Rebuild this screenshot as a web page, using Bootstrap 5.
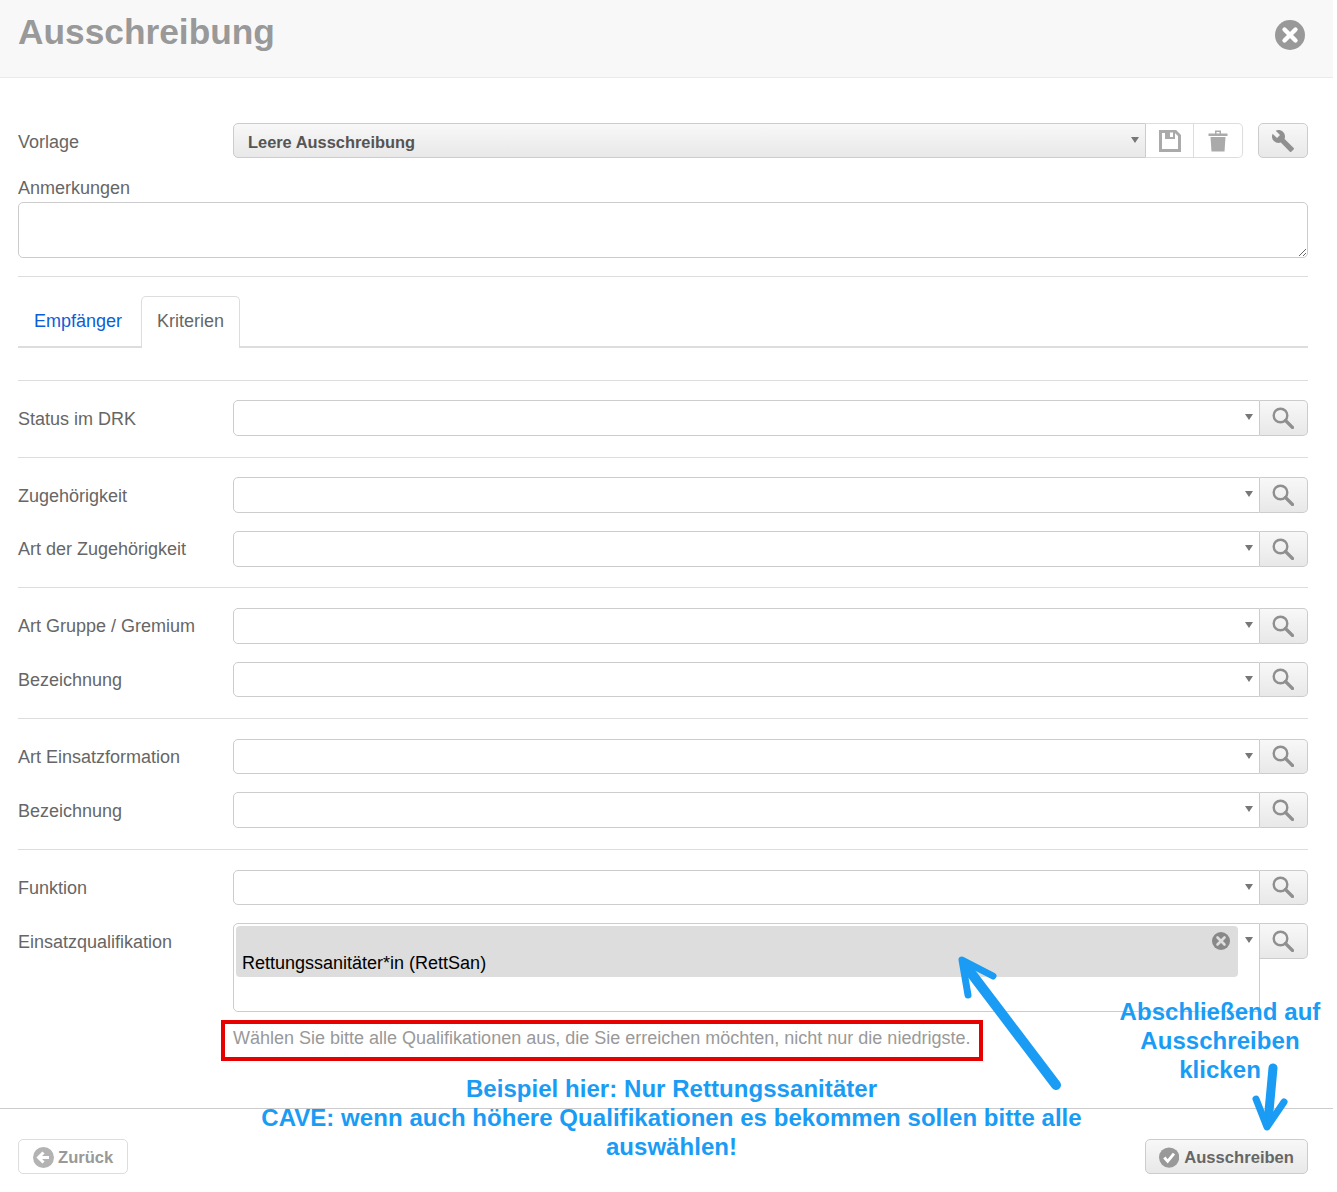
<!DOCTYPE html>
<html lang="de">
<head>
<meta charset="utf-8">
<title>Ausschreibung</title>
<link href="https://cdn.jsdelivr.net/npm/bootstrap@5.3.0/dist/css/bootstrap.min.css" rel="stylesheet">
<style>
html,body{height:1192px;overflow:hidden;background:#fff}
body{font-family:"Liberation Sans",Arial,sans-serif;font-size:18px;color:#666;line-height:1.2}
.shell{position:relative;width:1333px;height:1192px}
.dlg-head{height:78px;background:#f8f8f8;border-bottom:1px solid #eaeaea;padding:0 28px 0 18px}
.dlg-title{font-size:35.3px;font-weight:700;color:#999;line-height:1;margin:14px 0 0}
.dlg-close{margin:20px 0 0 0;width:30px;height:30px;padding:0;border:0;background:none;display:block}
.dlg-body{padding:45px 25px 0 18px}
.lbl{width:215px;flex:none;padding-top:2.6px}
.row-top .lbl{padding-top:4px}
.sel-box{flex:1 1 auto;min-width:0;height:100%;border:1px solid #ccc;border-radius:5px 0 0 5px;background:#fff;position:relative}
.sel-box.plate{background:linear-gradient(#f8f8f8,#e8e8e8);font-weight:700;font-size:16.4px;color:#555;padding:5px 0 0 14px;display:flex;align-items:center}
.caret-mk{position:absolute;right:6px;top:13px;width:0;height:0;border-left:4px solid transparent;border-right:4px solid transparent;border-top:6px solid #777}
.find-btn{flex:none;width:48px;height:100%;border:1px solid #ccc;border-left:0;border-radius:0 5px 5px 0;background:linear-gradient(#f8f8f8,#e8e8e8);display:flex;align-items:center;justify-content:center}
.find-btn svg{margin-right:2px}
.row-top{height:35px}
.tool-cell{flex:none;width:48px;height:100%;border:1px solid #ddd;border-left:0;background:#fff;display:flex;align-items:center;justify-content:center}
.tool-cell.last{width:49px;border-radius:0 5px 5px 0}
.wrench-btn{flex:none;width:50px;height:100%;margin-left:15px;border:1px solid #ccc;border-radius:5px;background:linear-gradient(#f8f8f8,#e8e8e8);display:flex;align-items:center;justify-content:center}
.note-lbl{margin-top:20px;height:24px;line-height:20px}
.note-area{display:block;width:100%;height:56px;border:1px solid #ccc;border-radius:5px;background:#fff;resize:vertical}
.rule{height:1px;background:#ddd;margin:18px 0 0}
.tabbar{display:flex;margin-top:19px;height:52px;border-bottom:2px solid #ddd}
.tabbar .tb{display:block;height:52px;text-decoration:none}
.tb.one{color:#0b5ed7;padding:0 16px;margin-right:3px;width:120px;line-height:50px}
.tb.two{color:#666;padding:0 15px;width:99px;line-height:48px;background:#fff;border:1px solid #ddd;border-bottom:0;border-radius:5px 5px 0 0;position:relative;margin-bottom:-2px}
.grp{padding:19.8px 0 20.53px;border-bottom:1px solid #ddd}
.grp.first{border-top:1px solid #ddd;margin-top:31.6px}
.grp.pre{padding-bottom:20.83px}
.grp.tail{border-bottom:0;padding:19.9px 0 0}
.frow{height:35.67px}
.frow + .frow{margin-top:18px}
.frow.tall{height:89px}
.frow.tall .lbl{padding-top:9px}
.frow.tall .find-btn{height:35.67px}
.chip{position:absolute;left:2px;top:2px;right:21px;height:51px;background:#ddd;border-radius:4px;color:#000;padding:27px 0 0 6px;line-height:20px}
.chip-x{position:absolute;right:7px;top:5px;width:20px;height:20px}
.hint{margin:16px 0 0 215px;color:#999;line-height:20px}
.dlg-foot{position:absolute;left:0;right:0;top:1108px;border-top:1px solid #ccc;padding:30px 25px 0 18px}
.act-btn{height:35px;border:1px solid #ccc;border-radius:5px;font-weight:700;display:flex;align-items:center;padding:2px 13px 0 14px;gap:4px;font-size:16.6px;background:#fff}
.act-btn.dim{color:#999;border-color:#ddd;width:110px}
.act-btn.main{color:#666;width:163px;padding-left:13px;gap:5px;background:linear-gradient(#f8f8f8,#e8e8e8)}
.red-box{position:absolute;left:221px;top:1020px;width:762px;height:41px;border:4px solid #e60000;pointer-events:none}
.note-blue{position:absolute;color:#1a9cf5;font-weight:700;font-size:24px;line-height:29px;text-align:center;letter-spacing:.05px}
.nb-a{left:240px;top:1074px;width:863px}
.nb-b{left:1110px;top:997px;width:220px}
.arrows{position:absolute;left:0;top:0;pointer-events:none}
</style>
</head>
<body>
<div class="shell">
  <div class="dlg-head d-flex justify-content-between align-items-start">
    <h1 class="dlg-title">Ausschreibung</h1>
    <button class="dlg-close" aria-label="Schließen">
      <svg width="30" height="30" viewBox="0 0 30 30"><circle cx="15" cy="15" r="15" fill="#999"/><path d="M9.500 9.500l11 11M20.500 9.500l-11 11" stroke="#fff" stroke-width="4.400" stroke-linecap="round"/></svg>
    </button>
  </div>

  <div class="dlg-body">
    <div class="d-flex align-items-center row-top">
      <div class="lbl">Vorlage</div>
      <div class="sel-box plate">Leere Ausschreibung<span class="caret-mk"></span></div>
      <div class="tool-cell"><svg width="22" height="22" viewBox="0 0 22 22"><path d="M1.500 1.500h15l4 4v15h-19z" fill="none" stroke="#aaa" stroke-width="3"/><path d="M6 1h10v8H6z" fill="#aaa"/><path d="M11 2.500h3v4.500h-3z" fill="#fff"/></svg></div>
      <div class="tool-cell last"><svg width="20" height="22" viewBox="0 0 20 22"><path d="M0.500 3.500h19v2.500H0.500zM7 0.500h6v3.500h-1.500V2h-3v2H7z" fill="#aaa"/><path d="M2.500 7h15l-1 14.500h-13z" fill="#aaa"/></svg></div>
      <div class="wrench-btn"><svg width="24" height="24" viewBox="0 0 24 24"><path d="M22.700 19l-9.100-9.100c.9-2.300.4-5-1.500-6.900-2-2-5-2.400-7.400-1.300L9 6 6 9 1.600 4.700C.4 7.100.9 10.100 2.900 12.100c1.900 1.900 4.600 2.400 6.900 1.500l9.100 9.100c.4.4 1 .4 1.400 0l2.300-2.300c.5-.4.5-1.100.1-1.400z" fill="#909090"/></svg></div>
    </div>

    <div class="note-lbl">Anmerkungen</div>
    <textarea class="note-area"></textarea>
    <div class="rule"></div>

    <div class="tabbar">
      <a class="tb one" href="#">Empfänger</a>
      <a class="tb two" href="#">Kriterien</a>
    </div>

    <div class="grp first">
      <div class="d-flex align-items-center frow"><div class="lbl">Status im DRK</div><div class="sel-box"><span class="caret-mk"></span></div><div class="find-btn"><svg width="22" height="22" viewBox="0 0 22 22"><circle cx="8.500" cy="8.500" r="6.800" fill="none" stroke="#8f8f8f" stroke-width="2.400"/><path d="M13.500 13.500l7 7" stroke="#8f8f8f" stroke-width="3.200" stroke-linecap="round"/></svg></div></div>
    </div>
    <div class="grp">
      <div class="d-flex align-items-center frow"><div class="lbl">Zugehörigkeit</div><div class="sel-box"><span class="caret-mk"></span></div><div class="find-btn"><svg width="22" height="22" viewBox="0 0 22 22"><circle cx="8.500" cy="8.500" r="6.800" fill="none" stroke="#8f8f8f" stroke-width="2.400"/><path d="M13.500 13.500l7 7" stroke="#8f8f8f" stroke-width="3.200" stroke-linecap="round"/></svg></div></div>
      <div class="d-flex align-items-center frow"><div class="lbl">Art der Zugehörigkeit</div><div class="sel-box"><span class="caret-mk"></span></div><div class="find-btn"><svg width="22" height="22" viewBox="0 0 22 22"><circle cx="8.500" cy="8.500" r="6.800" fill="none" stroke="#8f8f8f" stroke-width="2.400"/><path d="M13.500 13.500l7 7" stroke="#8f8f8f" stroke-width="3.200" stroke-linecap="round"/></svg></div></div>
    </div>
    <div class="grp">
      <div class="d-flex align-items-center frow"><div class="lbl">Art Gruppe / Gremium</div><div class="sel-box"><span class="caret-mk"></span></div><div class="find-btn"><svg width="22" height="22" viewBox="0 0 22 22"><circle cx="8.500" cy="8.500" r="6.800" fill="none" stroke="#8f8f8f" stroke-width="2.400"/><path d="M13.500 13.500l7 7" stroke="#8f8f8f" stroke-width="3.200" stroke-linecap="round"/></svg></div></div>
      <div class="d-flex align-items-center frow"><div class="lbl">Bezeichnung</div><div class="sel-box"><span class="caret-mk"></span></div><div class="find-btn"><svg width="22" height="22" viewBox="0 0 22 22"><circle cx="8.500" cy="8.500" r="6.800" fill="none" stroke="#8f8f8f" stroke-width="2.400"/><path d="M13.500 13.500l7 7" stroke="#8f8f8f" stroke-width="3.200" stroke-linecap="round"/></svg></div></div>
    </div>
    <div class="grp pre">
      <div class="d-flex align-items-center frow"><div class="lbl">Art Einsatzformation</div><div class="sel-box"><span class="caret-mk"></span></div><div class="find-btn"><svg width="22" height="22" viewBox="0 0 22 22"><circle cx="8.500" cy="8.500" r="6.800" fill="none" stroke="#8f8f8f" stroke-width="2.400"/><path d="M13.500 13.500l7 7" stroke="#8f8f8f" stroke-width="3.200" stroke-linecap="round"/></svg></div></div>
      <div class="d-flex align-items-center frow"><div class="lbl">Bezeichnung</div><div class="sel-box"><span class="caret-mk"></span></div><div class="find-btn"><svg width="22" height="22" viewBox="0 0 22 22"><circle cx="8.500" cy="8.500" r="6.800" fill="none" stroke="#8f8f8f" stroke-width="2.400"/><path d="M13.500 13.500l7 7" stroke="#8f8f8f" stroke-width="3.200" stroke-linecap="round"/></svg></div></div>
    </div>
    <div class="grp tail">
      <div class="d-flex align-items-center frow"><div class="lbl">Funktion</div><div class="sel-box"><span class="caret-mk"></span></div><div class="find-btn"><svg width="22" height="22" viewBox="0 0 22 22"><circle cx="8.500" cy="8.500" r="6.800" fill="none" stroke="#8f8f8f" stroke-width="2.400"/><path d="M13.500 13.500l7 7" stroke="#8f8f8f" stroke-width="3.200" stroke-linecap="round"/></svg></div></div>
      <div class="d-flex align-items-start frow tall"><div class="lbl">Einsatzqualifikation</div>
        <div class="sel-box"><div class="chip">Rettungssanitäter*in (RettSan)<svg class="chip-x" viewBox="0 0 20 20"><circle cx="10" cy="10" r="9" fill="#888"/><path d="M6.500 6.500l7 7M13.500 6.500l-7 7" stroke="#ddd" stroke-width="2.600" stroke-linecap="round"/></svg></div><span class="caret-mk"></span></div>
        <div class="find-btn"><svg width="22" height="22" viewBox="0 0 22 22"><circle cx="8.500" cy="8.500" r="6.800" fill="none" stroke="#8f8f8f" stroke-width="2.400"/><path d="M13.500 13.500l7 7" stroke="#8f8f8f" stroke-width="3.200" stroke-linecap="round"/></svg></div></div>
      <div class="hint">Wählen Sie bitte alle Qualifikationen aus, die Sie erreichen möchten, nicht nur die niedrigste.</div>
    </div>
  </div>

  <div class="dlg-foot d-flex justify-content-between">
    <div class="act-btn dim"><svg width="21" height="21" viewBox="0 0 21 21"><circle cx="10.500" cy="10.500" r="10.500" fill="#b3b3b3"/><path d="M16 10.500H6M10.500 5.500l-5 5 5 5" fill="none" stroke="#fff" stroke-width="3"/></svg><span>Zurück</span></div>
    <div class="act-btn main"><svg width="21" height="21" viewBox="0 0 21 21"><circle cx="10.500" cy="10.500" r="10.500" fill="#999"/><path d="M5.500 10.500l3.500 4 6.500-8" fill="none" stroke="#fff" stroke-width="3"/></svg><span>Ausschreiben</span></div>
  </div>

  <div class="red-box"></div>
  <div class="note-blue nb-a">Beispiel hier: Nur Rettungssanitäter<br>CAVE: wenn auch höhere Qualifikationen es bekommen sollen bitte alle<br>auswählen!</div>
  <div class="note-blue nb-b">Abschließend auf<br>Ausschreiben<br>klicken</div>
  <svg class="arrows" width="1333" height="1192" viewBox="0 0 1333 1192">
    <g fill="none" stroke="#1a9cf5" stroke-linecap="round" stroke-linejoin="round">
      <path d="M1056 1085L968 969" stroke-width="10"/>
      <path d="M968 995L962 960 993 976" stroke-width="7"/>
      <path d="M1273 1068L1268 1122" stroke-width="9"/>
      <path d="M1256 1099L1267 1127 1284 1102" stroke-width="7"/>
    </g>
  </svg>
</div>
</body>
</html>
